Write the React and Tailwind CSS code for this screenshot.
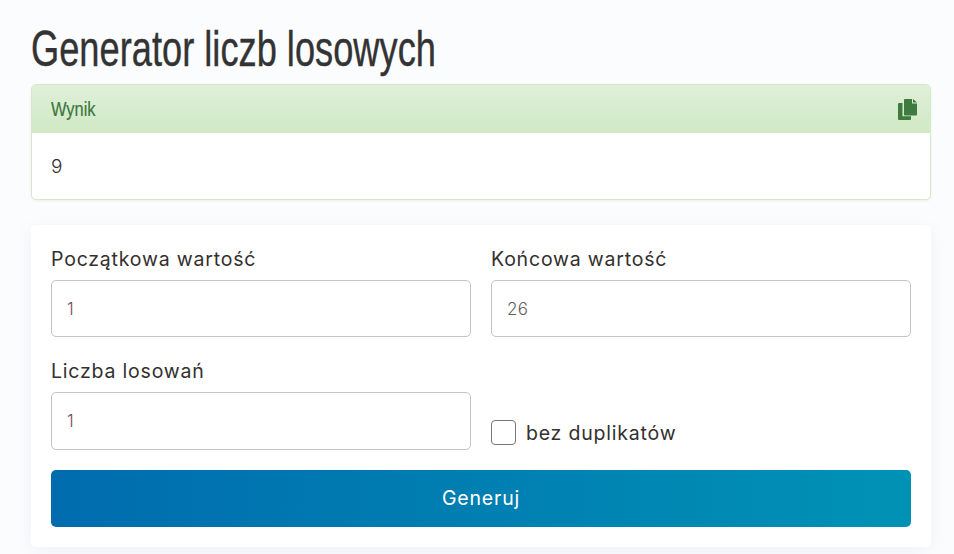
import React from 'react';

const labelCls = "block text-[19.5px] leading-[29px] tracking-[0.8px] text-[#33302e] mb-[6px]";
const inputCls = "block w-full px-[15px] bg-white border border-[#c4c4c4] rounded-[5px] text-[17px] font-light tracking-[0.4px] outline-none";

function CopyIcon() {
    return (
        <svg width="19" height="21" viewBox="0 0 19 21" fill="#3f7a3f">
            <path d="M7 0h7v4.500h5V15.500a1 1 0 0 1-1 1H7a1 1 0 0 1-1-1V1a1 1 0 0 1 1-1z" />
            <path d="M15 0l4 3.500h-4z" />
            <path d="M4.500 4v13.300H13V20a1 1 0 0 1-1 1H1a1 1 0 0 1-1-1V5a1 1 0 0 1 1-1z" />
        </svg>
    );
}

export default function App() {
    return (
        <div className="min-h-[554px] bg-[#fbfcfe] pl-[31px] pr-[23px] pt-[21px] pb-[7px] font-['Inter','Open_Sans',sans-serif] overflow-hidden">
            <h1 className="font-['Liberation_Sans',sans-serif] text-[50px] leading-[57px] text-[#333333] mb-[6px] origin-left scale-x-[0.725] whitespace-nowrap [-webkit-text-stroke:0.4px_#333333]">
                Generator liczb losowych
            </h1>

            <div className="bg-white border border-[#d6e9c6] rounded-[5px] shadow-[0_1px_3px_rgba(0,0,0,0.06)] overflow-hidden mb-[25px]">
                <div className="h-[48px] pl-[19px] pr-[13px] flex items-center justify-between bg-gradient-to-b from-[#dff0d8] to-[#d0e9c6]">
                    <span className="font-['Liberation_Sans',sans-serif] text-[20px] text-[#3c763d] origin-left scale-x-[0.82] [-webkit-text-stroke:0.2px_#3c763d]">Wynik</span>
                    <CopyIcon />
                </div>
                <div className="h-[66px] px-[19px] pt-[2px] flex items-center text-[19px] font-light text-[#33302e]">9</div>
            </div>

            <div className="bg-white rounded-[5px] shadow-[0_4px_20px_rgba(0,0,60,0.05)] p-[20px]">
                <div className="grid grid-cols-2 gap-x-[20px] gap-y-[20px]">
                    <div>
                        <label className={labelCls}>Początkowa wartość</label>
                        <input className={inputCls + " h-[57px] text-[#7a4a55]"} defaultValue="1" />
                    </div>
                    <div>
                        <label className={labelCls}>Końcowa wartość</label>
                        <input className={inputCls + " h-[57px] text-[#665c5c]"} defaultValue="26" />
                    </div>
                    <div>
                        <label className={labelCls}>Liczba losowań</label>
                        <input className={inputCls + " h-[58px] text-[#7a4a55]"} defaultValue="1" />
                    </div>
                    <div className="flex items-end pb-[2px]">
                        <label className="flex items-center gap-[10px] text-[19.5px] tracking-[0.8px] text-[#33302e]">
                            <span className="w-[25px] h-[25px] bg-white border border-[#767676] rounded-[4px]"></span>
                            <span className="pt-[2px]">bez duplikatów</span>
                        </label>
                    </div>
                </div>
                <button className="mt-[20px] block w-full h-[57px] rounded-[5px] text-[19.5px] tracking-[0.8px] text-white bg-gradient-to-r from-[#006cae] to-[#0092b5]">
                    Generuj
                </button>
            </div>
        </div>
    );
}
